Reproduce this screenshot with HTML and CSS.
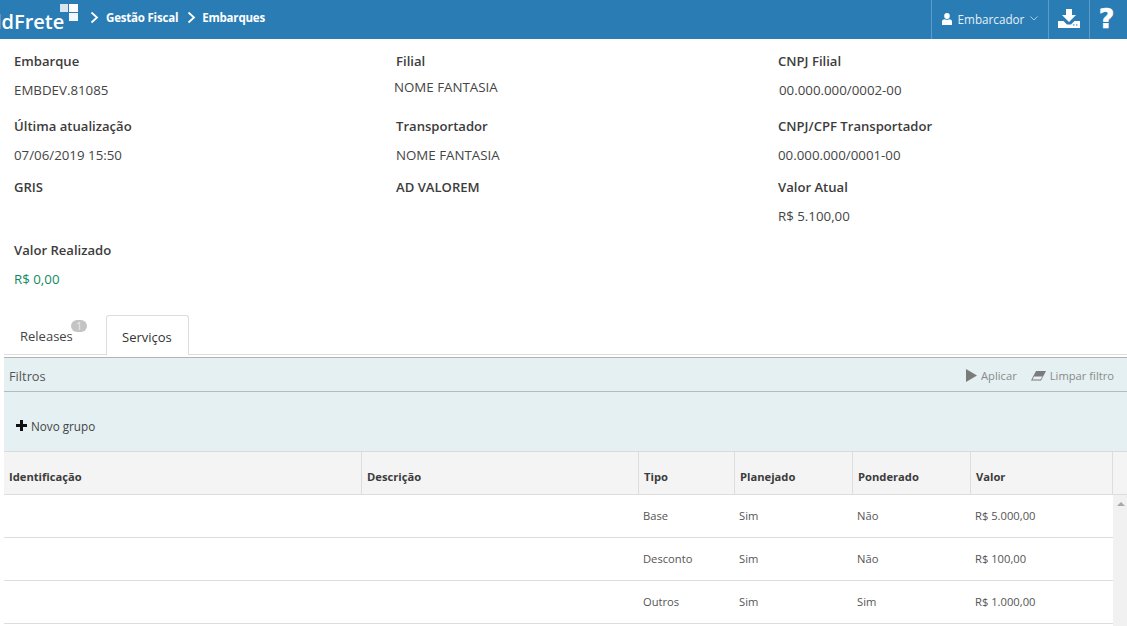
FILE: index.html
```html
<!DOCTYPE html>
<html lang="pt-BR">
<head>
<meta charset="utf-8">
<title>Embarques</title>
<link rel="stylesheet" href="styles.css">
</head>
<body>
<header class="topbar">
  <div class="brand">
    <span class="brand-name">ldFrete</span>
    <svg class="brand-mark" width="18" height="17" viewBox="0 0 18 17"><rect x="0" y="0" width="8" height="8" fill="#d6e5f1"/><rect x="9" y="0" width="9" height="8" fill="#fff"/><rect x="9" y="9" width="9" height="8" fill="#f2f7fb"/></svg>
  </div>
  <nav class="crumbs">
    <svg class="chev" width="9" height="13" viewBox="0 0 9 13"><path d="M1.5 1.5 7 6.500 1.500 11.500" fill="none" stroke="#fff" stroke-width="1.800"/></svg>
    <span>Gestão Fiscal</span>
    <svg class="chev" width="9" height="13" viewBox="0 0 9 13"><path d="M1.5 1.5 7 6.500 1.500 11.500" fill="none" stroke="#fff" stroke-width="1.800"/></svg>
    <span>Embarques</span>
  </nav>
  <div class="top-actions">
    <div class="top-item user">
      <svg width="10" height="12" viewBox="0 0 10 12"><ellipse cx="5" cy="3" rx="2.800" ry="3" fill="#fff"/><path d="M0 12V8.500C0 7 1.500 6.300 2.800 6.200 4.200 7 5.800 7 7.200 6.200 8.500 6.300 10 7 10 8.500V12Z" fill="#fff"/></svg>
      <span>Embarcador</span>
      <svg width="8" height="5" viewBox="0 0 8 5"><path d="M.5.5 4 4 7.500.5" fill="none" stroke="#a9cbe3" stroke-width="1"/></svg>
    </div>
    <div class="top-item icon-item">
      <svg width="22" height="19" viewBox="0 0 22 19"><path d="M8 0H14V6H18L11 13 4 6H8Z" fill="#fff"/><path d="M0 12H5.500L9 15.500H13L16.500 12H22V19H0Z" fill="#fff"/><rect x="15" y="15.500" width="1.500" height="1" fill="#2a7cb5"/><rect x="18" y="15.500" width="1.500" height="1" fill="#2a7cb5"/></svg>
    </div>
    <div class="top-item help">?</div>
  </div>
</header>

<section class="details">
  <div class="field"><div class="label">Embarque</div><div class="value">EMBDEV.81085</div></div>
  <div class="field"><div class="label">Filial</div><div class="value raised">NOME FANTASIA</div></div>
  <div class="field"><div class="label">CNPJ Filial</div><div class="value nudge">00.000.000/0002-00</div></div>
  <div class="field second"><div class="label">Última atualização</div><div class="value">07/06/2019 15:50</div></div>
  <div class="field second"><div class="label">Transportador</div><div class="value">NOME FANTASIA</div></div>
  <div class="field second"><div class="label">CNPJ/CPF Transportador</div><div class="value">00.000.000/0001-00</div></div>
  <div class="field short"><div class="label">GRIS</div></div>
  <div class="field short"><div class="label">AD VALOREM</div></div>
  <div class="field short"><div class="label">Valor Atual</div><div class="value">R$ 5.100,00</div></div>
  <div class="field"><div class="label">Valor Realizado</div><div class="value green">R$ 0,00</div></div>
</section>

<main class="panel">
  <div class="tabs">
    <div class="tab">Releases<span class="badge">1</span></div>
    <div class="tab active">Serviços</div>
  </div>
  <div class="filters">
    <div class="filters-bar">
      <span class="filters-title">Filtros</span>
      <div class="filters-actions">
        <span class="action"><svg width="11" height="13" viewBox="0 0 11 13"><path d="M0 0 11 6.500 0 13Z" fill="#7b7b7b"/></svg>Aplicar</span>
        <span class="action"><svg width="15" height="10" viewBox="0 0 15 10"><path d="M5 0H15L10 9.500H0Z" fill="#7b7b7b"/><path d="M3 5.500H11.500L9.500 8.500H1.500Z" fill="#e5f0f2"/></svg>Limpar filtro</span>
      </div>
    </div>
    <div class="filters-body">
      <span class="new-group"><svg width="11" height="11" viewBox="0 0 11 11"><path d="M4 0H7V4H11V7H7V11H4V7H0V4H4Z" fill="#111"/></svg>Novo grupo</span>
    </div>
  </div>
  <div class="grid">
    <div class="grid-row head">
      <div>Identificação</div><div>Descrição</div><div>Tipo</div><div>Planejado</div><div>Ponderado</div><div>Valor</div><div class="gutter"></div>
    </div>
    <div class="grid-scroll">
      <div class="grid-body">
        <div class="grid-row"><div></div><div></div><div>Base</div><div>Sim</div><div>Não</div><div>R$ 5.000,00</div></div>
        <div class="grid-row"><div></div><div></div><div>Desconto</div><div>Sim</div><div>Não</div><div>R$ 100,00</div></div>
        <div class="grid-row"><div></div><div></div><div>Outros</div><div>Sim</div><div>Sim</div><div>R$ 1.000,00</div></div>
      </div>
      <div class="scrollbar"><span class="arrow"></span></div>
    </div>
  </div>
</main>
</body>
</html>
```

FILE: styles.css
```css
* { box-sizing: border-box; }
html, body { height: 100%; }
body {
  margin: 0;
  height: 626px;
  overflow: hidden;
  background: #fff;
  color: #3a3a3a;
  font-family: "Open Sans", "Noto Sans", sans-serif;
  font-size: 12px;
}
.topbar {
  display: flex;
  align-items: stretch;
  height: 39px;
  background: #2a7cb5;
  color: #fff;
}
.brand {
  display: flex;
  width: 90px;
  overflow: hidden;
  flex: none;
}
.brand-name {
  width: 60px;
  flex: none;
  direction: rtl;
  margin-top: 8px;
  font-size: 20px;
  font-weight: 600;
  line-height: 27px;
  white-space: nowrap;
  color: #fff;
  unicode-bidi: plaintext;
  text-align: right;
  margin-left: -4px;
  margin-right: 4px;
}
.brand-mark { margin-top: 4px; flex: none; }
.crumbs {
  display: flex;
  align-items: center;
  gap: 7px;
  height: 35px;
  font-weight: 700;
  font-size: 11.500px;
  letter-spacing: -0.2px;
}
.crumbs span + .chev { margin-left: 2px; margin-right: -1px; }
.top-actions { display: flex; margin-left: auto; }
.top-item {
  display: flex;
  align-items: center;
  justify-content: center;
  border-left: 1px solid #5d9bc8;
}
.user { width: 117px; gap: 6px; padding-bottom: 2px; font-size: 11.700px; color: #e4eff7; }
.icon-item { width: 41px; padding-bottom: 3px; }
.help {
  width: 38px;
  padding-bottom: 3px;
  padding-right: 4px;
  font-family: "DejaVu Sans", sans-serif;
  font-weight: 700;
  font-size: 27px;
  color: #fff;
  -webkit-text-stroke: 0.6px #fff;
}
.details {
  display: grid;
  grid-template-columns: repeat(3, 382px);
  padding: 13px 0 0 14px;
  height: 276px;
  align-content: start;
}
.field { height: 65px; }
.field.second { height: 61px; }
.field.short { height: 63px; }
.label {
  font-size: 13.100px;
  font-weight: 600;
  line-height: 18px;
  color: #3c3c3c;
}
.value {
  margin-top: 11px;
  font-size: 13.300px;
  line-height: 18px;
  color: #444;
}
.value.raised { margin-top: 8px; margin-left: -2px; }
.value.nudge { margin-left: 1px; }
.value.green { color: #0f8a5f; }
.panel { padding-left: 4px; }
.tabs {
  display: flex;
  height: 40px;
  border-bottom: 1px solid #ddd;
}
.tab {
  position: relative;
  width: 102px;
  padding: 12px 0 0 16px;
  font-size: 13px;
  line-height: 18px;
  color: #444;
}
.tab.active {
  width: 83px;
  height: 40px;
  background: #fff;
  border: 1px solid #ddd;
  border-bottom: 0;
  border-radius: 3px 3px 0 0;
  padding: 12px 0 0 15px;
  color: #333;
}
.badge {
  position: absolute;
  left: 67px;
  top: 5px;
  width: 16px;
  height: 12px;
  border-radius: 6px;
  background: #c4c4c4;
  color: #eee;
  font-size: 10px;
  line-height: 12px;
  text-align: center;
}
.filters {
  margin-top: 2px;
  background: #e5f0f2;
  border-top: 1px solid #b0b4b5;
}
.filters-bar {
  display: flex;
  align-items: center;
  justify-content: space-between;
  height: 34px;
  padding: 2px 13px 0 5px;
  border-bottom: 1px solid #b3bbbd;
}
.filters-title { font-size: 12.800px; color: #555; }
.filters-actions { display: flex; gap: 14px; }
.action {
  display: flex;
  align-items: center;
  gap: 4px;
  font-size: 11.200px;
  color: #8a8a8a;
}
.filters-body {
  display: flex;
  align-items: center;
  height: 60px;
  padding: 8px 0 0 12px;
  border-bottom: 1px solid #dadada;
}
.new-group {
  display: flex;
  align-items: center;
  gap: 4px;
  font-size: 11.700px;
  color: #444;
}
.grid-row {
  display: grid;
  grid-template-columns: 358px 277px 96px 118px 118px 141px;
  height: 43px;
  border-bottom: 1px solid #ddd;
  align-items: center;
  font-size: 11.200px;
  line-height: 14px;
  color: #555;
  padding-bottom: 1px;
}
.grid-row > div { padding-left: 4px; }
.grid-row.head {
  grid-template-columns: 358px 277px 96px 118px 118px 142px 1fr;
  background: #f4f4f4;
  font-size: 11.200px;
  font-weight: 700;
  color: #3c3c3c;
  padding-bottom: 0;
}
.grid-row.head > div {
  height: 42px;
  padding-left: 5px;
  line-height: 50px;
  border-right: 1px solid #ddd;
}
.grid-row.head > .gutter { border-right: 0; }
.grid-scroll { display: flex; }
.grid-body { width: 1109px; }
.scrollbar {
  flex: 1;
  height: 132px;
  background: #f1f1f1;
  padding: 7px 0 0 4px;
}
.arrow {
  display: block;
  width: 0;
  height: 0;
  border-left: 4px solid transparent;
  border-right: 4px solid transparent;
  border-bottom: 4px solid #a8a8a8;
}
```
